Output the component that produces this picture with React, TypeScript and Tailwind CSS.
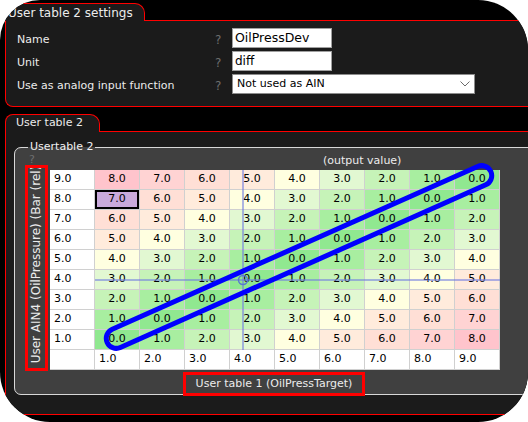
import React from "react";

const shade = [
  "bg-[#90e890]",
  "bg-[#a8eea0]",
  "bg-[#c6f3b8]",
  "bg-[#e2f8d2]",
  "bg-[#ffffe0]",
  "bg-[#ffebdc]",
  "bg-[#ffdfd6]",
  "bg-[#ffd3d3]",
  "bg-[#ffc4cc]",
];

const rows = [9, 8, 7, 6, 5, 4, 3, 2, 1];
const cols = [1, 2, 3, 4, 5, 6, 7, 8, 9];

function SettingRow({ label, children }: { label: string; children: React.ReactNode }) {
  return (
    <div className="flex h-[20px] items-center">
      <div className="w-[198px] pt-[4px] text-[#ececec]">{label}</div>
      <div className="w-[17px] pt-[4px] text-[12px] text-[#6e6e6e]">?</div>
      {children}
    </div>
  );
}

function TableGrid() {
  return (
    <div className="relative grid h-[200px] w-[450px] grid-cols-[repeat(10,44px)] grid-rows-[repeat(10,19px)] gap-px bg-[#d0d0d0] pb-px pr-px text-black">
      {rows.map((r) => (
        <React.Fragment key={r}>
          <div className="flex items-center bg-white pl-[4px]">{r.toFixed(1)}</div>
          {cols.map((c) => {
            const v = Math.abs(r - c);
            const selected = r === 8 && c === 1;
            return (
              <div
                key={c}
                className={
                  selected
                    ? "flex items-center justify-center border-2 border-black bg-[#c9aadb]"
                    : `flex items-center justify-center ${shade[v]}`
                }
              >
                {v.toFixed(1)}
              </div>
            );
          })}
        </React.Fragment>
      ))}
      <div className="bg-white" />
      {cols.map((c) => (
        <div key={c} className="flex items-center bg-white pl-[4px]">
          {c.toFixed(1)}
        </div>
      ))}

      {/* crosshair + selection band */}
      <svg className="pointer-events-none absolute left-0 top-0 overflow-visible" width="450" height="200">
        <line x1="193" y1="0" x2="193" y2="180" stroke="#6f7be0" strokeOpacity="0.75" strokeWidth="1.5" />
        <line x1="45" y1="110" x2="450" y2="110" stroke="#6f7be0" strokeOpacity="0.75" strokeWidth="1.5" />
        <circle cx="193" cy="110" r="4.5" fill="none" stroke="#5a78d0" strokeWidth="1.5" />
        <rect
          x={249 - 210}
          y={87 - 10}
          width="420"
          height="20"
          rx="10"
          fill="none"
          stroke="#0000ff"
          strokeWidth="5"
          transform="rotate(-24 249 87)"
        />
      </svg>
    </div>
  );
}

export default function App() {
  return (
    <div className="h-[422px] w-[528px] bg-white font-['DejaVu_Sans',Verdana,sans-serif] text-[11px]">
      <div className="relative isolate h-full w-full overflow-hidden rounded-tl-[40px] rounded-tr-[50px] rounded-b-[50px] bg-black pt-[3px]">
        {/* User table 2 settings */}
        <div className="pl-[5px]">
          <div className="relative z-10 -mb-px ml-[-8px] flex h-[18px] w-[148px] items-center rounded-t-[8px] rounded-tr-[10px] border border-b-0 border-[#ff0000] bg-[#1b1b1b] pl-[10px] text-[12px] text-[#ececec]">
            User table 2 settings
          </div>
          <div className="flex h-[87px] w-[540px] flex-col gap-[3px] rounded-bl-[8px] border border-r-0 border-[#ff0000] bg-[#1b1b1b] pl-[11px] pt-[7px]">
            <SettingRow label="Name">
              <div className="flex h-[20px] w-[100px] items-center border border-[#a0a0a0] bg-white pl-[2px] text-[12.5px] text-black">
                OilPressDev
              </div>
            </SettingRow>
            <SettingRow label="Unit">
              <div className="flex h-[20px] w-[100px] items-center border border-[#a0a0a0] bg-white pl-[2px] text-[12px] text-black">
                diff
              </div>
            </SettingRow>
            <SettingRow label="Use as analog input function">
              <div className="flex h-[20px] w-[243px] items-center justify-between border border-[#8c8c8c] bg-white pl-[4px] pr-[4px] text-black">
                <span>Not used as AIN</span>
                <svg width="10" height="6" viewBox="0 0 10 6">
                  <path d="M0.5 0.5 L5 5 L9.5 0.5" fill="none" stroke="#6b6b6b" strokeWidth="1" />
                </svg>
              </div>
            </SettingRow>
          </div>
        </div>

        {/* User table 2 */}
        <div className="mt-[7px] pl-[5px]">
          <div className="relative z-10 -mb-px flex h-[18px] w-[95px] items-center rounded-t-[8px] rounded-tr-[10px] border border-b-0 border-[#ff0000] bg-[#1b1b1b] pl-[10px] text-[#ececec]">
            User table 2
          </div>
          <div className="h-[284px] w-[540px] rounded-bl-[10px] border border-r-0 border-[#ff0000] bg-[#1b1b1b] pl-[8px] pt-[8px]">
            <fieldset className="w-[530px] rounded-[7px] border border-[#d8d8d8] bg-[#404040]">
              <legend className="ml-[13px] px-[2px] leading-[14px] text-[#f0f0f0]">Usertable 2</legend>
              <div className="flex">
                <div className="ml-[10px] flex w-[23px] flex-col">
                  <div className="h-[11px] overflow-hidden pl-[4px] leading-[12px] text-[#6e6e6e]">?</div>
                  <div className="flex h-[206px] flex-col items-center justify-end overflow-hidden border-[3px] border-[#ff0000] pb-[5px]">
                    <span className="rotate-180 whitespace-nowrap text-[12px] leading-[17px] text-[#ececec] [writing-mode:vertical-rl]">
                      User AIN4 (OilPressure) (Bar (rel))
                    </span>
                  </div>
                </div>
                <div className="ml-[2px] flex flex-col">
                  <div className="h-[16px] pl-[273px] leading-[14px] text-[#ececec]">(output value)</div>
                  <TableGrid />
                  <div className="relative z-10 -mb-[2px] ml-[133px] mt-[2px] flex h-[24px] w-[182px] items-center justify-center border-[3px] border-[#ff0000] bg-[#404040] text-[#ececec]">
                    User table 1 (OilPressTarget)
                  </div>
                </div>
              </div>
            </fieldset>
          </div>
        </div>
      </div>
    </div>
  );
}
